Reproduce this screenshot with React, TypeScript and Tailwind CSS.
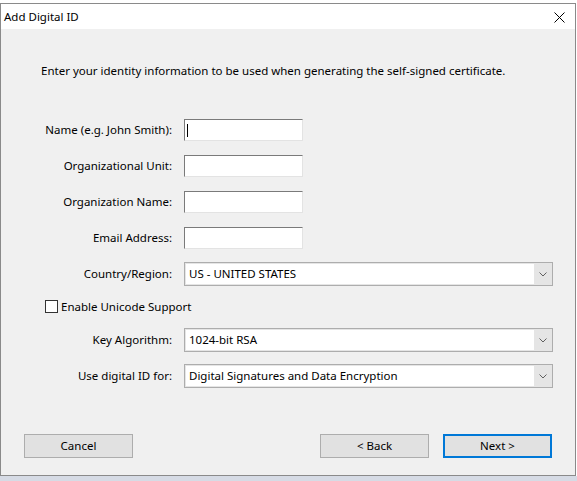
import React from "react";

const FONT = { fontFamily: '"Noto Sans", "Open Sans", sans-serif' };

function TextField({ caret = false }: { caret?: boolean }) {
  return (
    <div className="flex h-[22px] w-[119px] items-center border border-t-[#7a7a7a] border-l-[#7a7a7a] border-r-[#e3e3e3] border-b-[#e3e3e3] bg-white">
      {caret && <div className="ml-[2px] h-[13px] w-px bg-black" />}
    </div>
  );
}

function Combo({ value }: { value: string }) {
  return (
    <div className="flex h-[24px] w-[369px] border border-[#adadad] bg-[#e5e5e5] p-px">
      <div className="flex flex-1 items-center bg-white pl-[3px] text-[11.5px] leading-none text-black">
        {value}
      </div>
      <div className="flex w-[17px] items-center justify-center">
        <svg width="8" height="5" viewBox="0 0 8 5" fill="none">
          <path d="M0.5 0.5 L4 4 L7.5 0.5" stroke="#606060" strokeWidth="1" />
        </svg>
      </div>
    </div>
  );
}

function FieldRow({
  label,
  children,
  className = "",
}: {
  label: string;
  children: React.ReactNode;
  className?: string;
}) {
  return (
    <div className={`flex items-center gap-[12px] ${className}`}>
      <div className="w-[171px] text-right text-[11.5px] leading-none text-black">{label}</div>
      {children}
    </div>
  );
}

function Button({ label, primary = false, className = "" }: { label: string; primary?: boolean; className?: string }) {
  return (
    <div
      className={`flex h-[24px] w-[109px] items-center justify-center bg-[#e1e1e1] text-[11.5px] text-black ${
        primary ? "border-2 border-[#0078d7]" : "border border-[#adadad]"
      } ${className}`}
    >
      {label}
    </div>
  );
}

export default function App() {
  return (
    <div className="flex h-[481px] w-[577px] flex-col overflow-hidden bg-white" style={FONT}>
      {/* document peeking out behind the dialog */}
      <div className="h-[3px] overflow-hidden">
        <div
          className="-mt-[33px] flex gap-[40px] whitespace-nowrap pl-[36px] text-[38px] leading-[36px] text-black"
          style={{ fontFamily: '"Liberation Serif", serif' }}
        >
          <span>Chief Executive Officer</span>
          <span>Chief Financial Officer</span>
        </div>
      </div>

      <div className="flex h-[473px] w-[576px] flex-col border border-[#8a8a8a]">
        {/* title bar */}
        <div className="flex h-[25px] items-center justify-between bg-white pl-[3px] pr-[10px]">
          <span className="text-[11.5px] text-black">Add Digital ID</span>
          <svg width="11" height="11" viewBox="0 0 11 11" className="mt-[2px]">
            <path d="M0.5 0.5 L10.5 10.5 M10.5 0.5 L0.5 10.5" stroke="#000" strokeWidth="1" />
          </svg>
        </div>

        {/* body */}
        <div className="flex flex-1 flex-col bg-[#f0f0f0]">
          <div className="mt-[34px] h-[16px] pl-[40px] text-[11.5px] leading-[16px] text-black">
            Enter your identity information to be used when generating the self-signed certificate.
          </div>

          <div className="mt-[40px] flex flex-col gap-[14px]">
            <FieldRow label="Name (e.g. John Smith):">
              <TextField caret />
            </FieldRow>
            <FieldRow label="Organizational Unit:">
              <TextField />
            </FieldRow>
            <FieldRow label="Organization Name:">
              <TextField />
            </FieldRow>
            <FieldRow label="Email Address:">
              <TextField />
            </FieldRow>
          </div>

          <FieldRow label="Country/Region:" className="mt-[13px]">
            <Combo value="US - UNITED STATES" />
          </FieldRow>

          <div className="mt-[14px] flex h-[13px] items-center pl-[44px]">
            <div className="h-[13px] w-[13px] border border-[#333333] bg-white" />
            <span className="ml-[3px] text-[11.5px] leading-none text-black">Enable Unicode Support</span>
          </div>

          <FieldRow label="Key Algorithm:" className="mt-[15px]">
            <Combo value="1024-bit RSA" />
          </FieldRow>
          <FieldRow label="Use digital ID for:" className="mt-[12px]">
            <Combo value="Digital Signatures and Data Encryption" />
          </FieldRow>

          <div className="mt-[46px] flex pl-[23px]">
            <Button label="Cancel" />
            <Button label="< Back" className="ml-[187px]" />
            <Button label="Next >" primary className="ml-[14px]" />
          </div>
        </div>
      </div>

      <div className="flex-1 bg-[#d6dbe5]" />
    </div>
  );
}
